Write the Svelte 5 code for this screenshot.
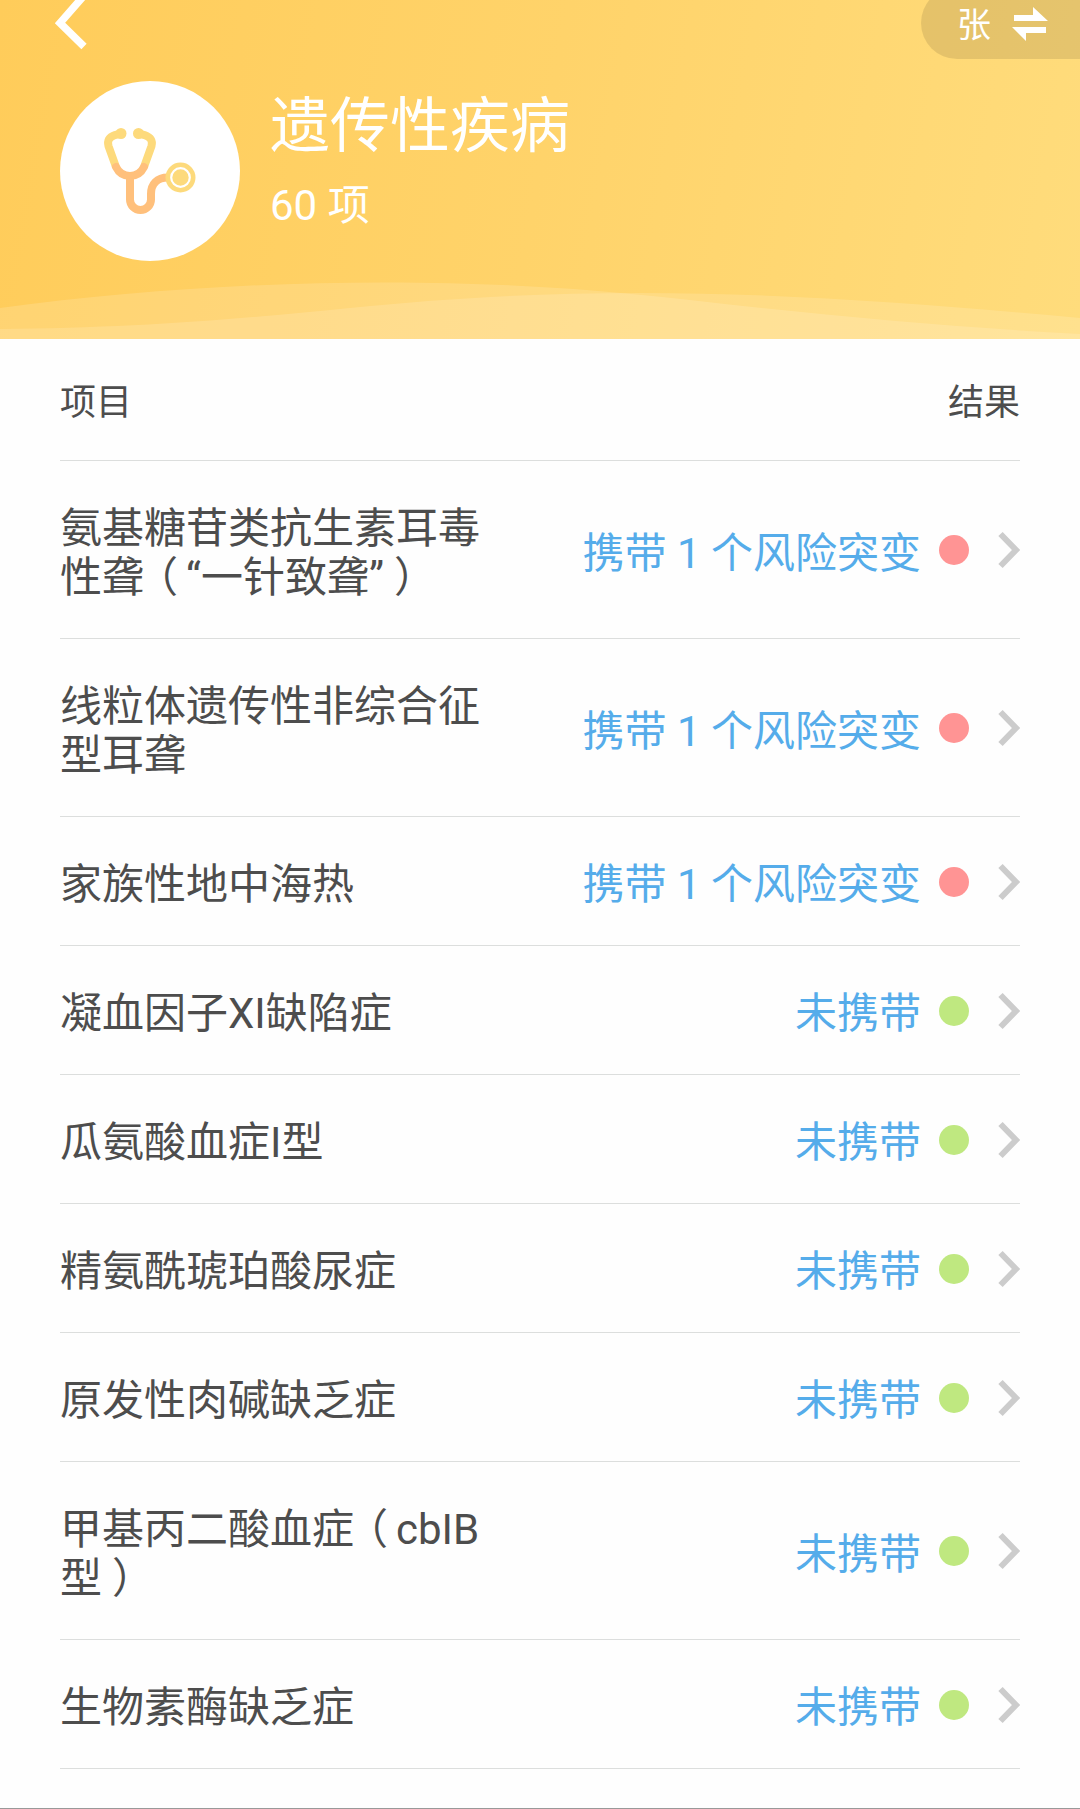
<script lang="ts">
	type Item = { lines: string[]; risk: number };

	const items: Item[] = [
		{ lines: ['氨基糖苷类抗生素耳毒', '性聋（“一针致聋”）'], risk: 1 },
		{ lines: ['线粒体遗传性非综合征', '型耳聋'], risk: 1 },
		{ lines: ['家族性地中海热'], risk: 1 },
		{ lines: ['凝血因子XI缺陷症'], risk: 0 },
		{ lines: ['瓜氨酸血症I型'], risk: 0 },
		{ lines: ['精氨酰琥珀酸尿症'], risk: 0 },
		{ lines: ['原发性肉碱缺乏症'], risk: 0 },
		{ lines: ['甲基丙二酸血症（cbIB', '型）'], risk: 0 },
		{ lines: ['生物素酶缺乏症'], risk: 0 },
	];

	// brackets are set half-width and padded back to a centred full cell
	const split = (line: string) => line.split(/([（）])/).filter(Boolean);
</script>

<div class="page">
	<header class="hero">
		<svg class="waves" viewBox="0 0 1080 60" aria-hidden="true">
			<path d="M0 29C120 13 250 3.500 385 3.500C520 3.500 620 13 690 21C820 36 950 48 1080 55V60H0Z" />
			<path d="M0 50C130 49 230 41 350 29C450 19 540 14 640 14C790 14 940 26 1080 39V60H0Z" />
		</svg>

		<div class="topbar">
			<button class="back" aria-label="返回">
				<svg width="36" height="60" viewBox="0 0 36 60">
					<path d="M31.500 -5L7 23L31 46.500" />
				</svg>
			</button>
			<button class="switcher">
				<span>张</span>
				<svg width="36" height="36" viewBox="0 0 36 36">
					<path d="M2 8H21V0L36 14H2ZM34 20V26H14V34L0 20Z" />
				</svg>
			</button>
		</div>

		<div class="summary">
			<div class="avatar">
				<svg width="180" height="180" viewBox="10 11 180 180" fill="none">
					<g class="ears">
						<path d="M71 63.500L65 65C59.500 67 57 70 58.500 76L66 97" />
						<path d="M88.500 63.500L94.500 65C100 67 103 70 101.500 76L94 97" />
					</g>
					<path class="tube" d="M66 97C69 103 73 106 80 106S91 103 94 97" />
					<path class="tube" d="M80 106V129.500A10.500 10.500 0 0 0 101 129.500V124C101 114 107 107.500 118 107.500" />
					<circle class="fill" cx="71" cy="63.500" r="5.500" />
					<circle class="fill" cx="88.500" cy="63.500" r="5.500" />
					<circle class="fill" cx="130.500" cy="107.500" r="15" />
					<circle class="ring" cx="130.500" cy="107.500" r="9.300" />
				</svg>
			</div>
			<div class="titles">
				<h1>遗传性疾病</h1>
				<p>60 项</p>
			</div>
		</div>
	</header>

	<main class="list">
		<div class="list-head">
			<span>项目</span>
			<span>结果</span>
		</div>
		{#each items as item (item.lines[0])}
			<div class="row">
				<div class="name">
					{#each item.lines as line}
						<div>{#each split(line) as part}<span class:open={part === '（'} class:close={part === '）'}>{part}</span>{/each}</div>
					{/each}
				</div>
				<div class="result">{item.risk > 0 ? `携带 ${item.risk} 个风险突变` : '未携带'}</div>
				<i class="dot" class:danger={item.risk > 0}></i>
				<svg class="arrow" width="22" height="38" viewBox="0 0 22 38">
					<path d="M2.500 3L18 19L2.500 35" />
				</svg>
			</div>
		{/each}
	</main>
</div>

<style>
	:global(body) {
		background: #fefefe;
	}

	.page {
		box-sizing: border-box;
		height: 1809px;
		overflow: hidden;
		background: #fefefe;
		border-bottom: 1px solid #999;
		font-family: Roboto, 'Noto Sans CJK SC', sans-serif;
		font-size: 42px;
		line-height: 49px;
		color: #4d4d4d;
	}

	.hero {
		position: relative;
		height: 339px;
		overflow: hidden;
		background: linear-gradient(100deg, #ffcc5a 0%, #ffd36a 50%, #ffdc7c 100%);
		color: #fff;
	}

	.waves {
		position: absolute;
		left: 0;
		bottom: 0;
		width: 1080px;
		height: 60px;
		fill: rgba(255, 255, 255, 0.14);
	}

	.topbar {
		display: flex;
		justify-content: space-between;
		height: 81px;
	}

	button {
		padding: 0;
		border: 0;
		background: none;
		color: inherit;
		font: inherit;
	}

	.back {
		height: 60px;
		margin-left: 53px;
	}

	.back svg {
		display: block;
		fill: none;
		stroke: #fff;
		stroke-width: 7.5;
	}

	.switcher {
		display: flex;
		align-items: center;
		gap: 21px;
		box-sizing: border-box;
		width: 159px;
		height: 72px;
		margin-top: -13px;
		padding: 3px 0 0 36px;
		border-radius: 36px 0 0 36px;
		background: rgba(0, 0, 0, 0.1);
		font-size: 34px;
	}

	.switcher span {
		padding-top: 2px;
	}

	.switcher svg {
		fill: #fff;
	}

	.summary {
		display: flex;
		gap: 30px;
		padding-left: 60px;
	}

	.avatar {
		width: 180px;
		height: 180px;
		border-radius: 50%;
		background: #fff;
	}

	.avatar svg {
		display: block;
	}

	.tube {
		stroke: #ffc07c;
		stroke-width: 8;
		stroke-linecap: round;
	}

	.ears {
		stroke: #fdda7c;
		stroke-width: 8;
	}

	.fill {
		fill: #fdda7c;
	}

	.ring {
		stroke: #fff;
		stroke-width: 2.2;
	}

	h1,
	p {
		margin: 0;
		font-weight: 400;
	}

	h1 {
		margin-top: 10px;
		font-size: 60px;
		line-height: 72px;
	}

	p {
		margin-top: 18px;
	}

	.list {
		padding: 0 60px;
	}

	.list-head,
	.row {
		display: flex;
		align-items: center;
		border-bottom: 1px solid #dcdedd;
	}

	.list-head {
		box-sizing: border-box;
		justify-content: space-between;
		height: 122px;
		padding-top: 8px;
		font-size: 36px;
	}

	.row {
		padding: 37px 0 36px;
	}

	.name {
		flex: 1;
		padding-top: 6px;
		white-space: nowrap;
	}

	.open,
	.close {
		font-feature-settings: 'halt';
	}

	.open {
		padding: 0 8px 0 13px;
	}

	.close {
		padding: 0 11px 0 10px;
	}

	.result {
		padding-top: 6px;
		color: #55acea;
	}

	.dot {
		width: 30px;
		height: 30px;
		margin: 0 29px 0 18px;
		border-radius: 50%;
		background: #bfe880;
	}

	.dot.danger {
		background: #ff9494;
	}

	.arrow {
		fill: none;
		stroke: #ccc;
		stroke-width: 6;
	}
</style>
